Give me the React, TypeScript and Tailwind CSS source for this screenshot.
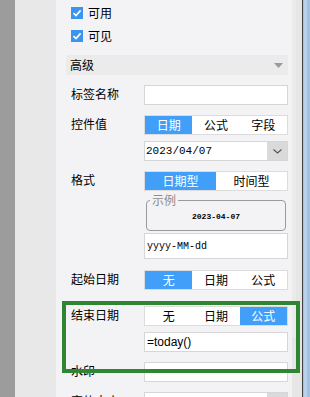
import type { ReactNode } from "react";

function Check({ label }: { label: string }) {
  return (
    <div className="flex h-[20px] items-center gap-[5px]">
      <div className="flex h-[12px] w-[12px] items-center justify-center bg-[#3b95ef]">
        <svg width="10" height="10" viewBox="0 0 10 10">
          <path d="M1.5 5.2 L4 7.6 L8.6 2.4" fill="none" stroke="#fff" strokeWidth="1.6" />
        </svg>
      </div>
      <span>{label}</span>
    </div>
  );
}

function Row({ label, className, children }: { label: string; className?: string; children: ReactNode }) {
  return (
    <div className={`flex pl-[5px] ${className ?? ""}`}>
      <div className="h-[20px] w-[73px] leading-[16px] pt-[1px]">{label}</div>
      <div className="flex w-[144px] flex-col">{children}</div>
    </div>
  );
}

function Seg({ items, active }: { items: string[]; active: number }) {
  return (
    <div className="flex h-[20px] border border-[#dcdcdc] bg-white">
      {items.map((t, i) => (
        <div
          key={t}
          className={`flex flex-1 items-center justify-center ${i === active ? "bg-[#419ffa] text-white" : ""}`}
        >
          {t}
        </div>
      ))}
    </div>
  );
}

function Input({ children, h = "h-[20px]" }: { children?: ReactNode; h?: string }) {
  return (
    <div className={`flex ${h} items-center border border-[#d6d6d6] bg-white pl-[2px]`}>{children}</div>
  );
}

function Select({ children, className }: { children?: ReactNode; className?: string }) {
  return (
    <div className={`flex h-[20px] items-stretch border border-[#d6d6d6] bg-white ${className ?? ""}`}>
      <div className="flex flex-1 items-center pl-[1px]">{children}</div>
      <div className="flex w-[20px] items-center justify-center bg-[#dadada]">
        <svg width="9" height="5" viewBox="0 0 9 5">
          <path d="M0.5 0.5 L4.5 4 L8.5 0.5" fill="none" stroke="#555" strokeWidth="1.1" />
        </svg>
      </div>
    </div>
  );
}

export default function App() {
  return (
    <div className="relative flex h-[397px] w-[310px] overflow-hidden font-['Noto_Sans_CJK_SC',sans-serif] text-[12px] text-black">
      <div className="w-[15px] bg-[#9c9c9c]" />
      <div className="w-[41px] bg-[#e8e8e8]" />
      <main className="w-[236px] bg-[#f3f3f5] pl-[10px] pr-[4px] pt-[3px]">
        <div className="flex flex-col gap-[3px] pl-[5px]">
          <Check label="可用" />
          <Check label="可见" />
        </div>

        {/* advanced header */}
        <div className="mt-[9px] flex h-[20px] items-center justify-between bg-[#ebebeb] pl-[4px] pr-[5px]">
          <span>高级</span>
          <svg width="9" height="5" viewBox="0 0 9 5">
            <path d="M0 0 H9 L4.5 5 Z" fill="#9a9a9a" />
          </svg>
        </div>

        <Row label="标签名称" className="mt-[10px]">
          <Input />
        </Row>

        <Row label="控件值" className="mt-[10px]">
          <Seg items={["日期", "公式", "字段"]} active={0} />
          <Select className="mt-[6px]">
            <span className="font-['Liberation_Mono',monospace] text-[11px]">2023/04/07</span>
          </Select>
        </Row>

        <Row label="格式" className="mt-[10px]">
          <Seg items={["日期型", "时间型"]} active={0} />
          <div className="relative mx-[2px] mt-[9px] flex h-[31px] items-center justify-center rounded-[4px] border border-[#9a9a9a]">
            <span className="absolute -top-[9px] left-[3px] bg-[#f3f3f5] px-[2px] leading-[16px] text-[#8c8c8c]">示例</span>
            <span className="pt-[2px] font-['Liberation_Mono',monospace] text-[8px] font-bold">2023-04-07</span>
          </div>
          <div className="mt-[2px]">
            <Input h="h-[26px]">
              <span className="font-['Liberation_Mono',monospace] text-[10px]">yyyy-MM-dd</span>
            </Input>
          </div>
        </Row>

        <Row label="起始日期" className="mt-[11px]">
          <Seg items={["无", "日期", "公式"]} active={0} />
        </Row>

        <Row label="结束日期" className="mt-[16px]">
          <Seg items={["无", "日期", "公式"]} active={2} />
          <div className="mt-[6px]">
            <Input>
              <span className="font-['Liberation_Sans',sans-serif] text-[12px]">=today()</span>
            </Input>
          </div>
        </Row>

        <Row label="水印" className="mt-[10px]">
          <Input />
        </Row>

        <Row label="字体大小" className="mt-[10px]">
          <Select />
        </Row>
      </main>

      {/* scrollbar */}
      <div className="flex w-[10px] bg-[#e6e6e6]">
        <div className="h-[337px] w-[4px] bg-[#ebebeb]" />
      </div>
      <div className="w-px bg-[#3f3f3f]" />
      <div className="flex w-[7px] bg-[#a3c1e0]">
        <div className="ml-[1px] w-[3px] bg-[#b9d2ec]" />
      </div>

      {/* highlight frame */}
      <div className="absolute left-[62px] top-[301px] h-[72px] w-[238px] border-4 border-[#2e8532]" />
    </div>
  );
}
